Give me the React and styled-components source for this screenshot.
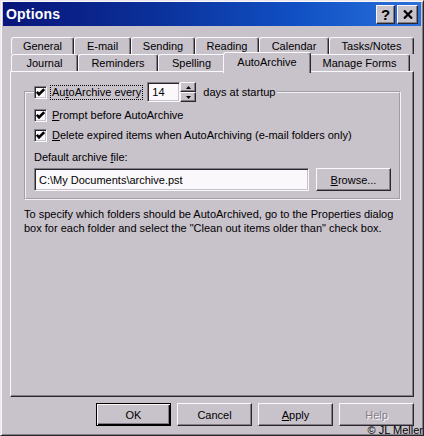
import styled, { createGlobalStyle } from "styled-components";

const FACE = "#c8c2cb";
const SHADOW = "#827d86";
const DARK = "#2a262c";
const LIGHT = "#fbf8fc";

const GlobalStyle = createGlobalStyle`
  html, body { margin: 0; padding: 0; background: ${FACE}; }
  body {
    font-family: "Liberation Sans", Arial, sans-serif;
    font-size: 11px;
    color: #000;
  }
  * { box-sizing: border-box; }
`;

const Window = styled.div`
  position: relative;
  width: 424px;
  height: 436px;
  padding: 1px 2px;
  background: ${FACE};
  border: 1px solid;
  border-color: #ebe7ed ${DARK} ${DARK} #ebe7ed;
  box-shadow: inset 1px 1px ${LIGHT}, inset -1px -1px ${SHADOW};
  display: flex;
  flex-direction: column;
  overflow: hidden;
`;

const TitleBar = styled.div`
  height: 24px;
  flex: none;
  display: flex;
  align-items: center;
  padding: 0 3px 0 3px;
  background: linear-gradient(90deg, #08157a 0%, #0b2f98 35%, #1050c4 70%, #2a70da 100%);
`;

const Title = styled.div`
  flex: 1;
  color: #fff;
  font-weight: bold;
  font-size: 14px;
  letter-spacing: 0.2px;
`;

const CapButtons = styled.div`
  display: flex;
  gap: 2px;
`;

const CapButton = styled.div`
  width: ${(p) => p.$w || 19}px;
  height: 19px;
  display: flex;
  align-items: center;
  justify-content: center;
  background: ${FACE};
  border: 1px solid;
  border-color: ${LIGHT} ${DARK} ${DARK} ${LIGHT};
  box-shadow: inset -1px -1px ${SHADOW};
  font-weight: bold;
  font-size: 15px;
  line-height: 1;
  color: #000;
`;

const Client = styled.div`
  flex: 1;
  display: flex;
  flex-direction: column;
  padding: 11px 7px 0 7px;
`;

const TabStrip = styled.div`
  display: flex;
  flex-direction: column;
  padding-left: 1px;
`;

const TabRow = styled.div`
  display: flex;
  height: 17px;
  position: relative;
  z-index: ${(p) => (p.$front ? 2 : 1)};
`;

const Tab = styled.div`
  width: ${(p) => p.$w}px;
  flex: none;
  height: ${(p) => (p.$selected ? 21 : 17)}px;
  margin: ${(p) => (p.$selected ? "-2px -2px -2px -2px" : "0")};
  padding-bottom: ${(p) => (p.$selected ? 3 : 0)}px;
  display: flex;
  align-items: center;
  justify-content: center;
  background: ${FACE};
  border-top: 1px solid ${LIGHT};
  border-left: 1px solid ${LIGHT};
  border-right: 1px solid ${DARK};
  border-radius: 3px 3px 0 0;
  box-shadow: inset -1px 0 ${SHADOW};
  position: relative;
  z-index: ${(p) => (p.$selected ? 3 : 1)};
  white-space: nowrap;
`;

const Page = styled.div`
  height: 326px;
  flex: none;
  border: 1px solid;
  border-color: ${LIGHT} ${DARK} ${DARK} ${LIGHT};
  box-shadow: inset -1px -1px ${SHADOW};
  padding: 10px 12px 0 13px;
  position: relative;
  z-index: 1;
`;

const GroupBox = styled.fieldset`
  margin: 0;
  width: 377px;
  border: 2px groove #f4f0f6;
  padding: 5px 8px 7px 8px;
  display: flex;
  flex-direction: column;
`;

const Legend = styled.legend`
  padding: 0 2px 0 0;
  height: 20px;
  display: flex;
  align-items: center;
`;

const CheckRow = styled.div`
  display: flex;
  align-items: center;
  height: 16px;
  margin-bottom: ${(p) => p.$mb || 0}px;
`;

const Box = styled.span`
  width: 13px;
  height: 13px;
  flex: none;
  background: ${LIGHT};
  border: 1px solid;
  border-color: ${SHADOW} ${LIGHT} ${LIGHT} ${SHADOW};
  box-shadow: inset 1px 1px ${DARK}, inset -1px -1px ${FACE};
  display: flex;
  align-items: center;
  justify-content: center;
  margin-right: 3px;
`;

const Label = styled.span`
  padding: 0 1px;
  line-height: 13px;
  border: 1px ${(p) => (p.$focus ? "dotted #000" : "solid transparent")};
  white-space: nowrap;
`;

const Spin = styled.div`
  display: flex;
  margin: 0 7px 0 4px;
`;

const Field = styled.div`
  width: ${(p) => p.$w}px;
  height: ${(p) => p.$h}px;
  background: ${LIGHT};
  border: 1px solid;
  border-color: ${SHADOW} ${LIGHT} ${LIGHT} ${SHADOW};
  box-shadow: inset 1px 1px ${DARK}, inset -1px -1px ${FACE};
  display: flex;
  align-items: center;
  padding-left: 4px;
  white-space: nowrap;
`;

const SpinButtons = styled.div`
  display: flex;
  flex-direction: column;
`;

const SpinButton = styled.div`
  width: 16px;
  height: 10px;
  background: ${FACE};
  border: 1px solid;
  border-color: ${LIGHT} ${DARK} ${DARK} ${LIGHT};
  box-shadow: inset -1px -1px ${SHADOW};
  display: flex;
  align-items: center;
  justify-content: center;
`;

const Caption = styled.div`
  line-height: 13px;
  margin: 8px 0 4px 0;
`;

const FileRow = styled.div`
  display: flex;
  gap: 7px;
`;

const Button = styled.div`
  width: ${(p) => p.$w || 75}px;
  height: 23px;
  flex: none;
  display: flex;
  align-items: center;
  justify-content: center;
  background: ${FACE};
  border: 1px solid;
  border-color: ${(p) => (p.$default ? "#000" : `${LIGHT} ${DARK} ${DARK} ${LIGHT}`)};
  box-shadow: ${(p) =>
    p.$default
      ? `inset 1px 1px ${LIGHT}, inset -1px -1px #000, inset -2px -2px ${SHADOW}`
      : `inset -1px -1px ${SHADOW}`};
  color: ${(p) => (p.$disabled ? SHADOW : "#000")};
  text-shadow: ${(p) => (p.$disabled ? `1px 1px ${LIGHT}` : "none")};
`;

const Note = styled.p`
  margin: 7px 0 0 0;
  line-height: 14px;
  width: 380px;
`;

const ButtonRow = styled.div`
  display: flex;
  justify-content: flex-end;
  gap: 6px;
  margin-top: 6px;
`;

const Credit = styled.div`
  position: absolute;
  right: 0;
  bottom: -1px;
  font-size: 11px;
  line-height: 11px;
  color: #000;
`;

function Check() {
  return (
    <svg width="9" height="9" viewBox="0 0 9 9">
      <polyline points="0.8,3.8 3,6.4 8.2,1.2" fill="none" stroke="#000" strokeWidth="2.6" />
    </svg>
  );
}

function CheckBox({ children, focus, mb }) {
  return (
    <CheckRow $mb={mb}>
      <Box>
        <Check />
      </Box>
      <Label $focus={focus}>{children}</Label>
    </CheckRow>
  );
}

function Arrow({ up }) {
  return (
    <svg width="5" height="3" viewBox="0 0 5 3">
      <polygon points={up ? "2.5,0 5,3 0,3" : "0,0 5,0 2.5,3"} fill="#000" />
    </svg>
  );
}

const backTabs = [
  ["General", 63],
  ["E-mail", 57],
  ["Sending", 64],
  ["Reading", 64],
  ["Calendar", 70],
  ["Tasks/Notes", 85],
];

const frontTabs = [
  ["Journal", 67],
  ["Reminders", 80],
  ["Spelling", 67],
  ["AutoArchive", 88, true],
  ["Manage Forms", 101],
];

export default function App() {
  return (
    <>
      <GlobalStyle />
      <Window>
        <TitleBar>
          <Title>Options</Title>
          <CapButtons>
            <CapButton>?</CapButton>
            <CapButton $w={21}>
              <svg width="10" height="9" viewBox="0 0 10 9">
                <path d="M1 0.5 L9 8.5 M9 0.5 L1 8.5" stroke="#000" strokeWidth="2.2" />
              </svg>
            </CapButton>
          </CapButtons>
        </TitleBar>
        <Client>
          <TabStrip>
            <TabRow>
              {backTabs.map(([name, w]) => (
                <Tab key={name} $w={w}>
                  {name}
                </Tab>
              ))}
            </TabRow>
            <TabRow $front>
              {frontTabs.map(([name, w, sel]) => (
                <Tab key={name} $w={w} $selected={sel}>
                  {name}
                </Tab>
              ))}
            </TabRow>
          </TabStrip>
          <Page>
            <GroupBox>
              <Legend>
                <Box>
                  <Check />
                </Box>
                <Label $focus>
                  Au<u>t</u>oArchive every
                </Label>
                <Spin>
                  <Field $w={33} $h={20}>
                    14
                  </Field>
                  <SpinButtons>
                    <SpinButton>
                      <Arrow up />
                    </SpinButton>
                    <SpinButton>
                      <Arrow />
                    </SpinButton>
                  </SpinButtons>
                </Spin>
                <span>days at startup</span>
              </Legend>
              <CheckBox mb={4}>
                <u>P</u>rompt before AutoArchive
              </CheckBox>
              <CheckBox>
                <u>D</u>elete expired items when AutoArchiving (e-mail folders only)
              </CheckBox>
              <Caption>
                Default archive <u>f</u>ile:
              </Caption>
              <FileRow>
                <Field $w={275} $h={23}>
                  C:\My Documents\archive.pst
                </Field>
                <Button>
                  <u>B</u>rowse...
                </Button>
              </FileRow>
            </GroupBox>
            <Note>
              To specify which folders should be AutoArchived, go to the Properties dialog box for
              each folder and select the "Clean out items older than" check box.
            </Note>
          </Page>
          <ButtonRow>
            <Button $default>OK</Button>
            <Button>Cancel</Button>
            <Button>
              <u>A</u>pply
            </Button>
            <Button $disabled>Help</Button>
          </ButtonRow>
        </Client>
        <Credit>© JL Meller</Credit>
      </Window>
    </>
  );
}
